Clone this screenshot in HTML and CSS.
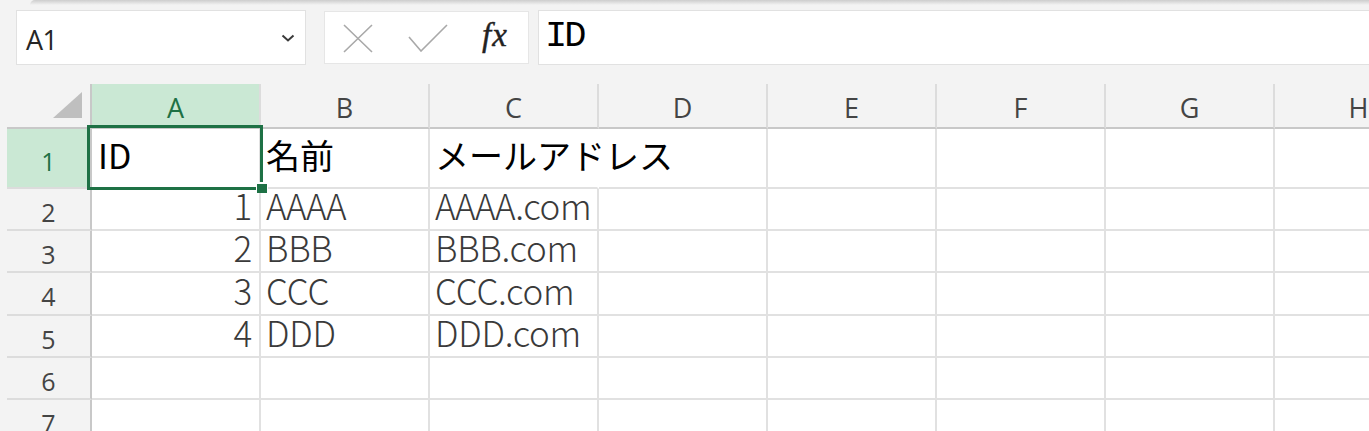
FILE: index.html
```html
<!DOCTYPE html>
<html lang="ja">
<head>
<meta charset="utf-8">
<title>Sheet</title>
<link rel="stylesheet" href="styles.css">
</head>
<body>
<div class="app">
  <div class="ribbon-shadow"></div>
  <div class="formula-bar">
    <div class="name-box">
      <span class="name">A1</span>
      <svg class="chev" width="14" height="8" viewBox="0 0 14 8"><polyline points="1.5,1.5 7,6.5 12.5,1.5" fill="none" stroke="#3a3a3a" stroke-width="2"/></svg>
    </div>
    <div class="fx-buttons">
      <svg class="icon-x" width="30" height="29" viewBox="0 0 30 29"><path d="M1 1 L29 28 M29 1 L1 28" stroke="#a9a9a9" stroke-width="1.6" fill="none"/></svg>
      <svg class="icon-check" width="40" height="28" viewBox="0 0 40 28"><polyline points="1,13 13,27 39,1" fill="none" stroke="#a9a9a9" stroke-width="1.6"/></svg>
      <span class="fx">fx</span>
    </div>
    <div class="formula-input">ID</div>
  </div>

  <div class="sheet">
    <div class="corner"><svg width="29" height="26" viewBox="0 0 29 26"><polygon points="29,0 29,26 0,26" fill="#bfbfbf"/></svg></div>
    <div class="col-h sel">A</div>
    <div class="col-h">B</div>
    <div class="col-h">C</div>
    <div class="col-h">D</div>
    <div class="col-h">E</div>
    <div class="col-h">F</div>
    <div class="col-h">G</div>
    <div class="col-h">H</div>

    <div class="row-h sel">1</div>
    <div class="cell r1 first">ID</div>
    <div class="cell r1">名前</div>
    <div class="cell r1 spill">メールアドレス</div>
    <div class="cell r1"></div>
    <div class="cell r1"></div>
    <div class="cell r1"></div>
    <div class="cell r1"></div>
    <div class="cell r1"></div>

    <div class="row-h">2</div>
    <div class="cell num">1</div>
    <div class="cell">AAAA</div>
    <div class="cell">AAAA.com</div>
    <div class="cell"></div>
    <div class="cell"></div>
    <div class="cell"></div>
    <div class="cell"></div>
    <div class="cell"></div>

    <div class="row-h">3</div>
    <div class="cell num">2</div>
    <div class="cell">BBB</div>
    <div class="cell">BBB.com</div>
    <div class="cell"></div>
    <div class="cell"></div>
    <div class="cell"></div>
    <div class="cell"></div>
    <div class="cell"></div>

    <div class="row-h">4</div>
    <div class="cell num">3</div>
    <div class="cell">CCC</div>
    <div class="cell">CCC.com</div>
    <div class="cell"></div>
    <div class="cell"></div>
    <div class="cell"></div>
    <div class="cell"></div>
    <div class="cell"></div>

    <div class="row-h">5</div>
    <div class="cell num">4</div>
    <div class="cell">DDD</div>
    <div class="cell">DDD.com</div>
    <div class="cell"></div>
    <div class="cell"></div>
    <div class="cell"></div>
    <div class="cell"></div>
    <div class="cell"></div>

    <div class="row-h">6</div>
    <div class="cell"></div>
    <div class="cell"></div>
    <div class="cell"></div>
    <div class="cell"></div>
    <div class="cell"></div>
    <div class="cell"></div>
    <div class="cell"></div>
    <div class="cell"></div>

    <div class="row-h">7</div>
    <div class="cell"></div>
    <div class="cell"></div>
    <div class="cell"></div>
    <div class="cell"></div>
    <div class="cell"></div>
    <div class="cell"></div>
    <div class="cell"></div>
    <div class="cell"></div>

    <div class="selection"></div>
    <div class="handle"></div>
  </div>
</div>
</body>
</html>
```

FILE: styles.css
```css
html, body {
  margin: 0;
  padding: 0;
}
body {
  background: #f3f3f3;
  width: 1369px;
  height: 431px;
  overflow: hidden;
  font-family: "Open Sans", "Noto Sans", sans-serif;
}
.app {
  width: 1369px;
  height: 431px;
  overflow: hidden;
}
.ribbon-shadow {
  height: 5px;
  margin-left: 30px;
  border-top-left-radius: 8px;
  background: linear-gradient(to bottom, #cdcdcd 0%, #dedede 45%, #f3f3f3 100%);
}

/* formula bar */
.formula-bar {
  display: flex;
  align-items: flex-start;
  margin-top: 5px;
  padding-left: 16px;
  height: 55px;
}
.name-box {
  flex: none;
  width: 290px;
  height: 55px;
  box-sizing: border-box;
  background: #fff;
  border: 1px solid #e1e1e1;
  display: flex;
  align-items: center;
  justify-content: space-between;
  padding: 0 10px 0 9px;
}
.name {
  font-size: 27px;
  color: #262626;
  line-height: 1;
  padding-top: 3px;
  letter-spacing: -0.5px;
}
.chev {
  display: block;
  margin-top: 1px;
}
.fx-buttons {
  flex: none;
  margin-left: 18px;
  margin-top: 1px;
  width: 205px;
  height: 53px;
  box-sizing: border-box;
  background: #fff;
  border: 1px solid #e6e6e6;
  display: flex;
  align-items: center;
  padding-left: 18px;
}
.icon-x {
  display: block;
  margin-top: 1px;
}
.icon-check {
  display: block;
  margin-left: 35px;
  margin-top: 1px;
}
.fx {
  margin-left: 34px;
  font-family: "Liberation Serif", serif;
  font-style: italic;
  font-size: 33px;
  letter-spacing: 1px;
  color: #222;
  line-height: 1;
  margin-top: -4px;
  -webkit-text-stroke: 0.4px #222;
}
.formula-input {
  flex: 1;
  margin-left: 9px;
  height: 55px;
  box-sizing: border-box;
  background: #fff;
  border: 1px solid #e1e1e1;
  border-right: none;
  padding-left: 6px;
  display: flex;
  align-items: center;
  font-family: "Liberation Mono", "DejaVu Sans Mono", monospace;
  font-size: 37px;
  letter-spacing: -3px;
  color: #000;
  padding-bottom: 4px;
}

/* sheet grid */
.sheet {
  position: relative;
  margin-top: 19px;
  margin-left: 7px;
  display: grid;
  grid-template-columns: 85px repeat(8, 169px);
  grid-template-rows: 45px 60px 42px 42px 43px 42px 42px 42px;
}
.corner {
  background: #f3f3f3;
  border-right: 2px solid #c8c8c8;
  border-bottom: 2px solid #c8c8c8;
  display: flex;
  justify-content: flex-end;
  align-items: flex-end;
  padding: 0 8px 9px 0;
}
.corner svg {
  display: block;
}
.col-h {
  background: #f3f3f3;
  border-right: 2px solid #dcdcdc;
  border-bottom: 2px solid #c8c8c8;
  display: flex;
  justify-content: center;
  align-items: center;
  padding-top: 3px;
  font-size: 27px;
  line-height: 1;
  color: #444;
}
.col-h.sel {
  background: #cae8d4;
  color: #1e7145;
}
.row-h {
  background: #f3f3f3;
  border-right: 2px solid #c8c8c8;
  border-bottom: 2px solid #dcdcdc;
  display: flex;
  justify-content: center;
  align-items: center;
  padding-top: 6px;
  font-size: 25px;
  line-height: 1;
  color: #444;
}
.row-h.sel {
  background: #cae8d4;
  color: #1e7145;
}
.cell {
  background: #fff;
  border-right: 2px solid #e1e1e1;
  border-bottom: 2px solid #e1e1e1;
  display: flex;
  align-items: flex-end;
  padding: 0 7px 7px 5px;
  white-space: nowrap;
  font-family: "Noto Sans CJK JP", sans-serif;
  font-weight: 300;
  font-size: 35px;
  line-height: 1;
  color: #3a3a3a;
  letter-spacing: -0.3px;
  min-width: 0;
}
.cell.num {
  justify-content: flex-end;
}
.cell.r1 {
  font-weight: 400;
  font-size: 34px;
  color: #000;
  letter-spacing: 0;
  padding-bottom: 15px;
  padding-left: 5px;
}
.cell.r1.first {
  padding-left: 6px;
}
.cell.spill {
  border-right-color: #fff;
  position: relative;
  z-index: 1;
}

.selection {
  position: absolute;
  left: 80px;
  top: 41px;
  width: 176px;
  height: 65px;
  box-sizing: border-box;
  border: 3px solid #1e7145;
  z-index: 2;
}
.handle {
  position: absolute;
  left: 250px;
  top: 100px;
  width: 10px;
  height: 9px;
  background: #1e7145;
  box-shadow: 0 -1px 0 1px #fff;
  z-index: 3;
}
```
